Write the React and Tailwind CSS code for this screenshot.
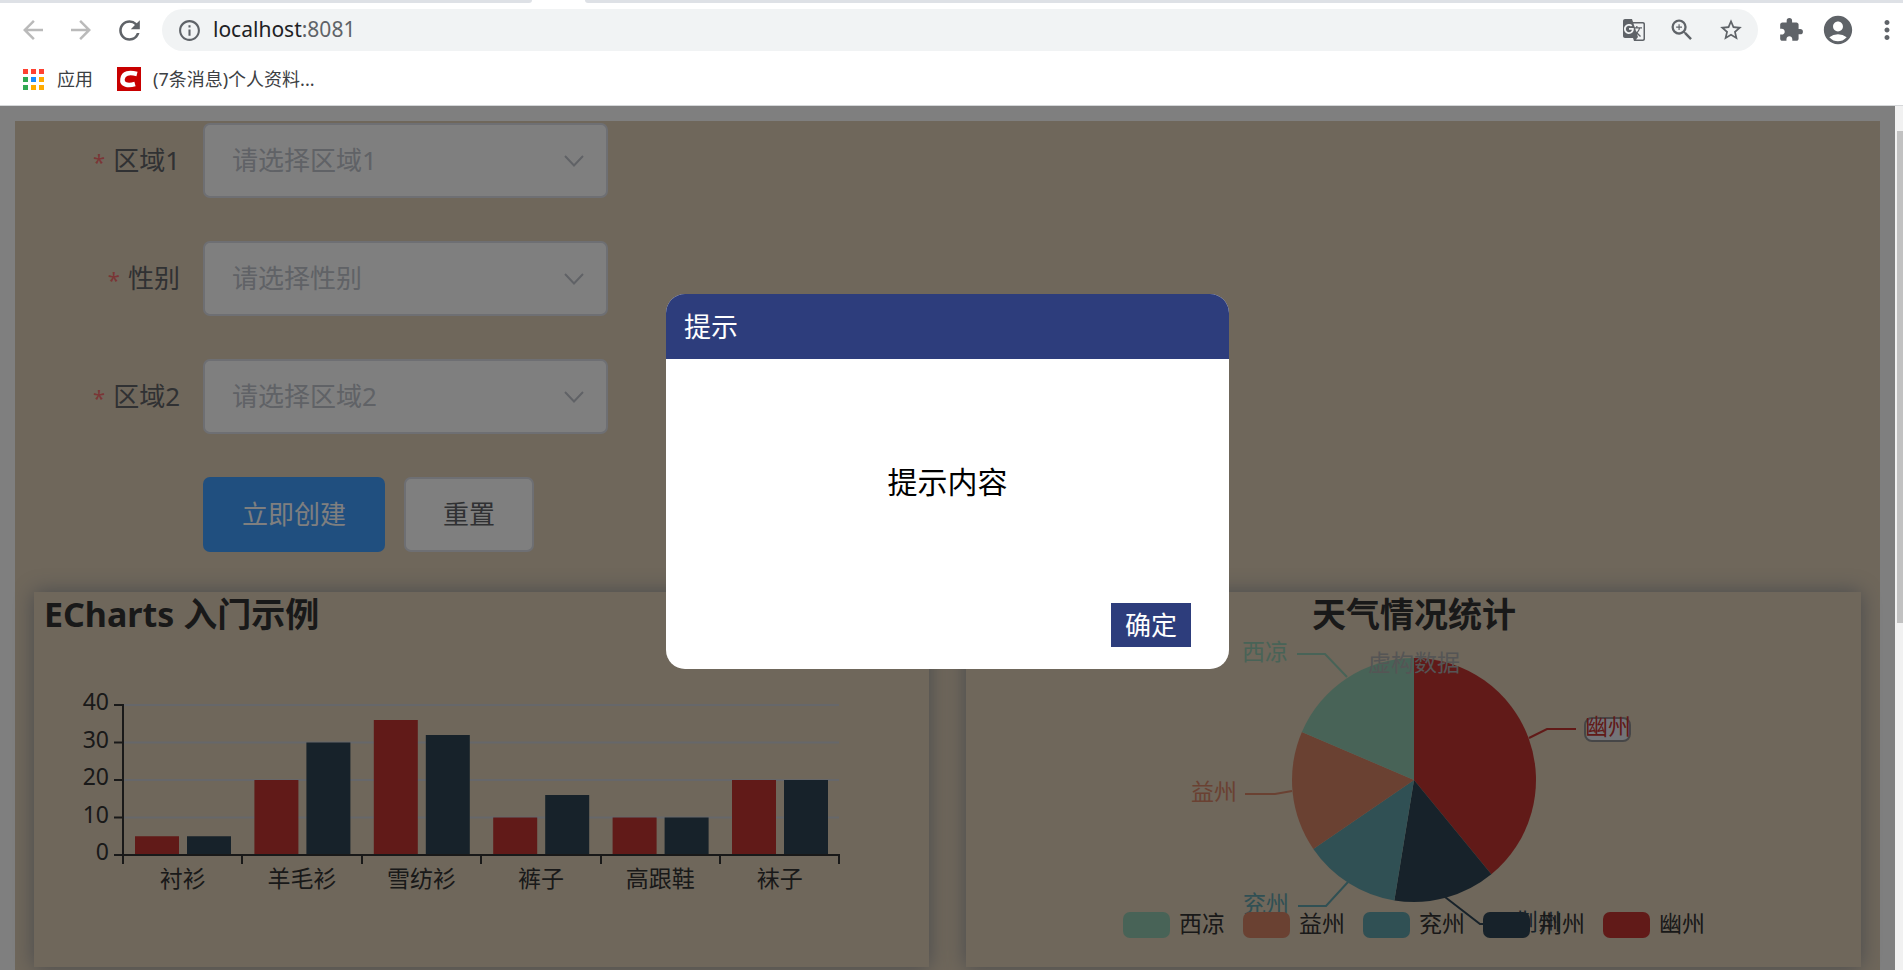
import { useState } from 'react';
import {
    MdAccountCircle,
    MdArrowBack,
    MdArrowForward,
    MdExtension,
    MdGTranslate,
    MdInfoOutline,
    MdMoreVert,
    MdRefresh,
    MdStarBorder,
    MdZoomIn,
} from 'react-icons/md';

const barData = [
    { name: '衬衫', a: 5, b: 5 },
    { name: '羊毛衫', a: 20, b: 30 },
    { name: '雪纺衫', a: 36, b: 32 },
    { name: '裤子', a: 10, b: 16 },
    { name: '高跟鞋', a: 10, b: 10 },
    { name: '袜子', a: 20, b: 20 },
];

const pieData = [
    { name: '幽州', value: 1548, color: '#c23531', line: '563,146 581,137 610,137', x: 619, y: 143 },
    { name: '荆州', value: 535, color: '#2f4554', line: '479,305 514,332 540,332', x: 549, y: 338 },
    { name: '兖州', value: 510, color: '#61a0a8', line: '382,290 360,314 332,314', x: 277, y: 320 },
    { name: '益州', value: 634, color: '#d48265', line: '326,199 309,202 279,202', x: 225, y: 208 },
    { name: '西凉', value: 735, color: '#91c7ae', line: '381,85 359,62 331,62', x: 276, y: 68 },
];

const fields = [
    { id: 'region1', label: '区域1', placeholder: '请选择区域1' },
    { id: 'gender', label: '性别', placeholder: '请选择性别' },
    { id: 'region2', label: '区域2', placeholder: '请选择区域2' },
];

const appColors = [
    'bg-[#ff4131]', 'bg-[#ff4131]', 'bg-[#ff4131]',
    'bg-[#30a952]', 'bg-[#1a8cff]', 'bg-[#ffab00]',
    'bg-[#30a952]', 'bg-[#ffab00]', 'bg-[#ffab00]',
];

function BrowserBar() {
    return (
        <header className="shrink-0 bg-white border-b border-[#d5d7d9]">
            {/* Tab strip edge */}
            <div className="flex h-[3px] bg-white">
                <div className="w-[532px] rounded-br-lg bg-[#dee1e6]"></div>
                <div className="ml-[53px] flex-1 rounded-bl-lg bg-[#dee1e6]"></div>
            </div>

            {/* Toolbar */}
            <div className="flex items-center h-[54px] pl-[18px] pr-px text-[#5f6368]">
                <button aria-label="后退" className="w-12 text-[#bababa]"><MdArrowBack size={30} /></button>
                <button aria-label="前进" className="w-12 text-[#bababa]"><MdArrowForward size={30} /></button>
                <button aria-label="刷新" className="w-12"><MdRefresh size={31} /></button>
                <div className="flex flex-1 items-center h-[42px] pl-[15px] pr-[14px] rounded-full bg-[#f1f3f4]">
                    <MdInfoOutline size={25} />
                    <div className="flex-1 ml-[11px] text-[21px] text-[#5f6368]">
                        <span className="text-[#202124]">localhost</span>:8081
                    </div>
                    <div className="flex items-center gap-[22px]">
                        <button aria-label="翻译"><MdGTranslate size={24} /></button>
                        <button aria-label="缩放"><MdZoomIn size={28} /></button>
                        <button aria-label="收藏"><MdStarBorder size={26} /></button>
                    </div>
                </div>
                <div className="flex items-center gap-[17px] ml-5">
                    <button aria-label="扩展程序"><MdExtension size={26} /></button>
                    <button aria-label="用户"><MdAccountCircle size={34} /></button>
                    <button aria-label="更多"><MdMoreVert size={30} /></button>
                </div>
            </div>

            {/* Bookmarks */}
            <nav className="flex items-center h-12 pb-1 pl-[23px] text-[18px] text-[#3c4043]">
                <a href="#apps" className="flex items-center">
                    <span className="grid grid-cols-3 gap-[3px]">
                        {appColors.map((color, i) => (
                            <span key={i} className={`size-[5px] ${color}`}></span>
                        ))}
                    </span>
                    <span className="ml-[13px]">应用</span>
                </a>
                <a href="#profile" className="flex items-center ml-6">
                    <svg className="size-6" viewBox="0 0 24 24">
                        <rect width="24" height="24" fill="#c80000" />
                        <path d="M20 7C12 5 6.500 6 5.500 12C4.500 18 11 19 18 17" fill="none" stroke="#fff" strokeWidth="4.500" />
                    </svg>
                    <span className="ml-3">(7条消息)个人资料...</span>
                </a>
            </nav>
        </header>
    );
}

function FilterForm() {
    return (
        <form className="flex flex-col gap-[43px] pt-[2px] text-[26px]" onSubmit={(e) => e.preventDefault()}>
            {fields.map((field) => (
                <div key={field.id} className="flex items-center">
                    <label htmlFor={field.id} className="w-[188px] pr-[23px] text-right text-[#606266]">
                        <span className="mr-2 text-[22px] text-[#f56c6c]">*</span>
                        {field.label}
                    </label>
                    <div className="relative w-[405px]">
                        <select
                            id={field.id}
                            defaultValue=""
                            className="block w-full h-[75px] px-[27px] appearance-none rounded-[7px] border-2 border-[#dcdfe6] bg-white text-[#c0c4cc]"
                        >
                            <option value="">{field.placeholder}</option>
                        </select>
                        <svg
                            className="absolute right-6 top-8 w-5 h-3 pointer-events-none"
                            viewBox="0 0 20 12"
                            fill="none"
                            stroke="#c0c4cc"
                            strokeWidth="2"
                        >
                            <path d="M1 1L10 10.500L19 1" />
                        </svg>
                    </div>
                </div>
            ))}
            <div className="flex gap-[19px] pl-[188px]">
                <button type="submit" className="h-[75px] px-[39px] rounded-[7px] bg-[#409eff] text-white">立即创建</button>
                <button type="reset" className="h-[75px] px-[37px] rounded-[7px] border-2 border-[#dcdfe6] bg-white text-[#606266]">重置</button>
            </div>
        </form>
    );
}

function BarChart() {
    const left = 89;
    const base = 263;
    const band = 119.4;
    const unit = 3.75;

    return (
        <svg viewBox="0 0 895 375" className="block w-full" fontSize="23" fill="#333">
            <text x="10" y="35" fontSize="34" fontWeight="bold">ECharts 入门示例</text>
            {[0, 10, 20, 30, 40].map((v) => (
                <g key={v}>
                    {v > 0 && <path d={`M${left} ${base - v * unit}H805`} stroke="#ccced4" strokeWidth="2" />}
                    <path d={`M80 ${base - v * unit}H${left}`} stroke="#333" strokeWidth="2" />
                    <text x="75" y={base - v * unit + 5} textAnchor="end">{v}</text>
                </g>
            ))}
            {barData.map((d, i) => (
                <g key={d.name}>
                    <rect x={left + i * band + 12} y={base - d.a * unit} width="44" height={d.a * unit} fill="#c23531" />
                    <rect x={left + i * band + 64} y={base - d.b * unit} width="44" height={d.b * unit} fill="#2f4554" />
                    <text x={left + (i + 0.5) * band} y="295" textAnchor="middle">{d.name}</text>
                </g>
            ))}
            {/* Axes */}
            <path d={`M${left} 112V${base}H806`} fill="none" stroke="#333" strokeWidth="2" />
            {[0, 1, 2, 3, 4, 5, 6].map((i) => (
                <path key={i} d={`M${Math.round(left + i * band)} ${base}v9`} stroke="#333" strokeWidth="2" />
            ))}
        </svg>
    );
}

function PieChart() {
    const cx = 448;
    const cy = 188;
    const r = 122;
    const total = pieData.reduce((sum, d) => sum + d.value, 0);

    const point = (value) => {
        const angle = (value / total) * 2 * Math.PI;
        return `${cx + r * Math.sin(angle)} ${cy - r * Math.cos(angle)}`;
    };

    let sum = 0;
    const slices = pieData.map((d) => {
        const start = sum;
        sum += d.value;
        return { ...d, path: `M${cx} ${cy}L${point(start)}A${r} ${r} 0 0 1 ${point(sum)}Z` };
    });

    return (
        <svg viewBox="0 0 895 375" className="block w-full" fontSize="23" fill="#333">
            {slices.map((d) => (
                <g key={d.name}>
                    <path d={d.path} fill={d.color} />
                    <polyline points={d.line} fill="none" stroke={d.color} strokeWidth="2" />
                    {d.name === '幽州' && (
                        <rect x="619" y="126" width="45" height="23" rx="7" fill="#e6e9f0" stroke="#8c8d8e" strokeWidth="2" />
                    )}
                    <text x={d.x} y={d.y} fill={d.color}>{d.name}</text>
                </g>
            ))}
            <text x={cx} y="35" fontSize="34" fontWeight="bold" textAnchor="middle">天气情况统计</text>
            <text x={cx} y="79" fill="#aaa" textAnchor="middle">虚构数据</text>
            {/* Legend */}
            {[...pieData].reverse().map((d, i) => (
                <g key={d.name}>
                    <rect x={157 + i * 120} y="320" width="47" height="26" rx="7" fill={d.color} />
                    <text x={213 + i * 120} y="340">{d.name}</text>
                </g>
            ))}
        </svg>
    );
}

function Dialog({ onClose }) {
    return (
        <div className="absolute inset-0 flex items-start justify-center pt-[188px] bg-black/50">
            <div role="dialog" aria-labelledby="dialog-title" className="flex flex-col w-[563px] h-[375px] overflow-hidden rounded-[19px] bg-white">
                <h2 id="dialog-title" className="flex items-center h-[65px] px-[18px] pt-[2px] bg-[#2d3d7c] text-[27px] text-white">提示</h2>
                <p className="flex flex-1 items-center justify-center text-[30px] text-black">提示内容</p>
                <div className="flex justify-end pr-[38px] pb-[22px]">
                    <button onClick={onClose} className="w-20 h-11 bg-[#2d3d7c] text-[26px] leading-none text-white">确定</button>
                </div>
            </div>
        </div>
    );
}

export default function App() {
    const [open, setOpen] = useState(true);

    return (
        <div className="flex flex-col h-screen overflow-hidden font-['Noto_Sans','Noto_Sans_CJK_SC',sans-serif]">
            <BrowserBar />
            <div className="flex flex-1 min-h-0">
                <main className="relative flex-1 overflow-hidden bg-white p-[15px]">
                    <div className="bg-[#deceb6]">
                        <FilterForm />
                        <div className="grid grid-cols-2 gap-[37px] px-[19px] pt-10 pb-10">
                            <section className="bg-[#deceb6] shadow-[0_0_20px_#909399]"><BarChart /></section>
                            <section className="bg-[#deceb6] shadow-[0_0_20px_#909399]"><PieChart /></section>
                        </div>
                    </div>
                    {open && <Dialog onClose={() => setOpen(false)} />}
                </main>
                {/* Scrollbar */}
                <div className="w-2 bg-[#f1f1f1] pt-[25px] pl-[2px]">
                    <div className="h-[492px] bg-[#c1c1c1]"></div>
                </div>
            </div>
        </div>
    );
}
